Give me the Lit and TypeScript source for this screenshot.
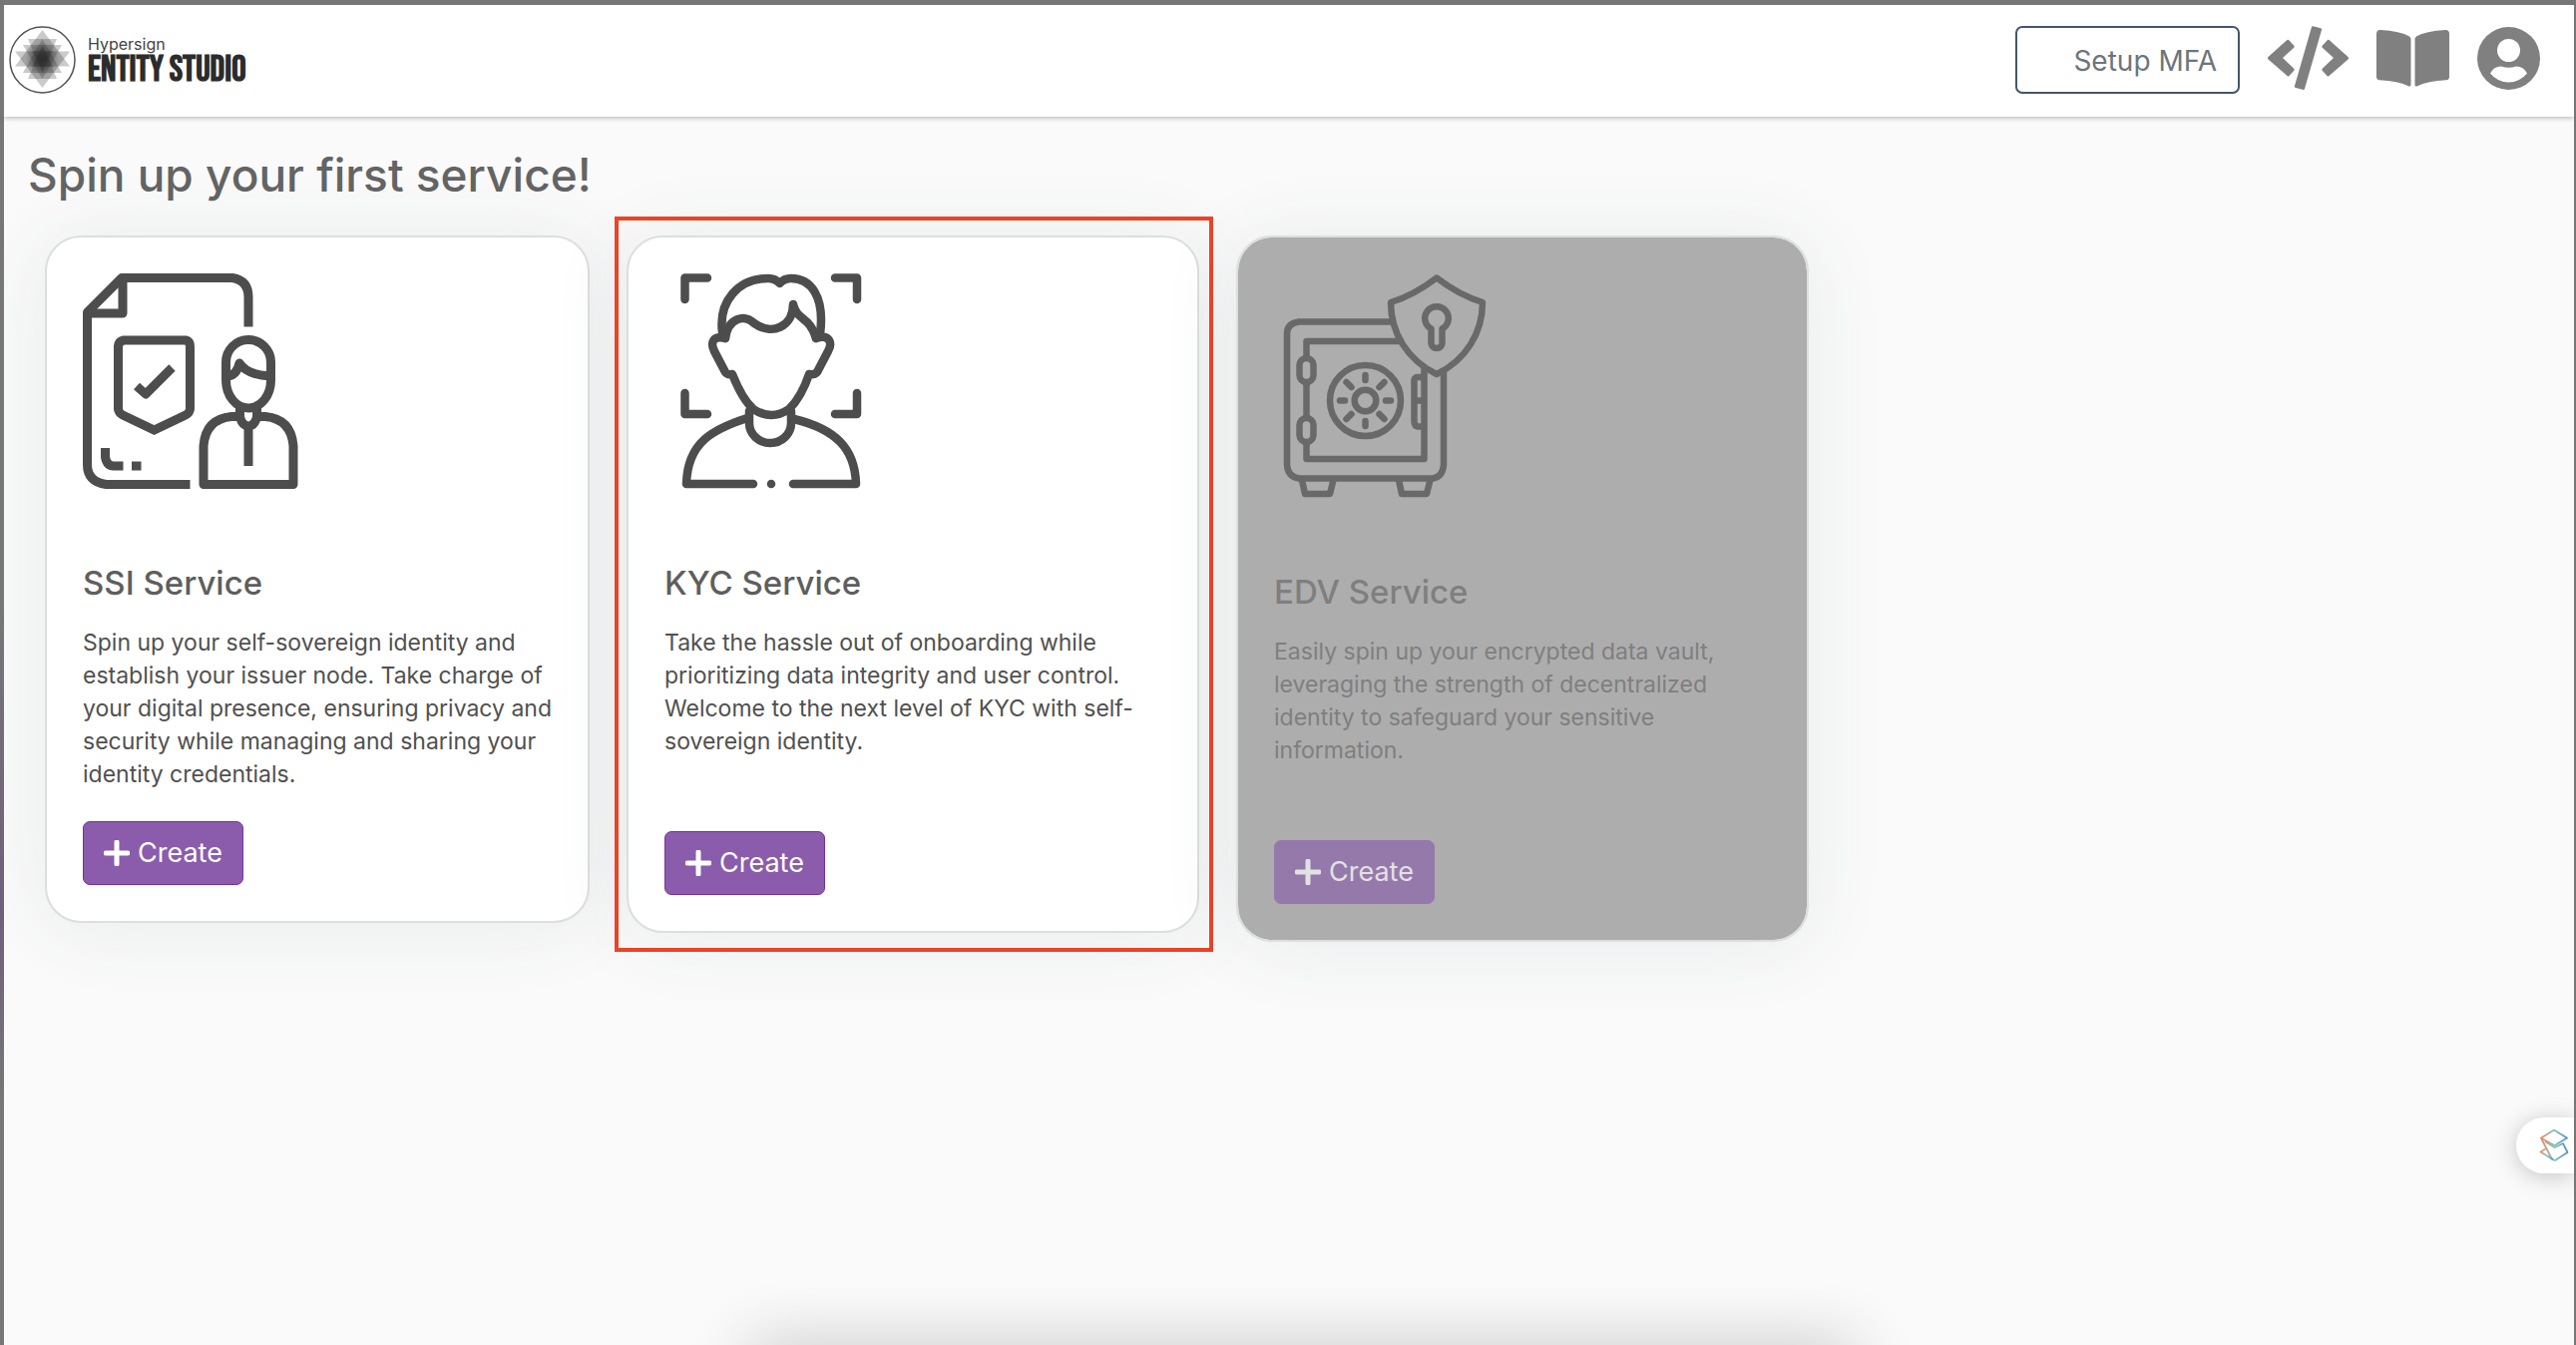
import { LitElement, html, css, svg } from "lit";
import { customElement, property } from "lit/decorators.js";

const plusIcon = html`<svg class="plus" viewBox="0 0 26 26" aria-hidden="true">
  <path d="M13 2v22M2 13h22" fill="none" stroke="currentColor" stroke-width="5" stroke-linecap="round" />
</svg>`;

const ssiArt = svg`
  <g fill="none" stroke="currentColor" stroke-width="9">
    <path d="M107.500 211.500H23.500Q4.500 209 4.500 191.500V39L39 4.500H150Q166 7 166 24V53.500" stroke-linejoin="round" />
    <path d="M4.500 40H40V4.500" stroke-linejoin="round" />
    <path d="M41 67H103Q107.500 68 107.500 73V136Q107 140 103 142L71.500 157L40 142Q36 140 35.500 136V73Q36 68 41 67Z" />
    <path d="M54 113L63 121L89.500 94.500" stroke-linejoin="round" />
    <path d="M22.500 175V184Q24 193 31 193H40.500M49 193H58.500" />
    <path d="M143.500 89A22.500 22.500 0 0 1 188.500 89V107A22.500 28 0 0 1 143.500 107Z" />
    <path d="M144 103Q154 103 157 90Q165 102 188 103" stroke-linejoin="round" />
    <path d="M157 143.500H149Q123 146 121 173V211.500H211V173Q209 146 183 143.500H175" stroke-linejoin="round" />
    <path d="M157.500 135V144Q160 153 166 153Q172 153 174.500 144V135M166 153V193" />
  </g>`;

const kycArt = svg`
  <g fill="none" stroke="currentColor" stroke-width="8.500" stroke-linecap="round" stroke-linejoin="round" transform="translate(14 0)">
    <path d="M29 4.500H6.500V26M157 4.500H179V26M6.500 120V141H29M179 120V141H157" />
    <path d="M44 59C40 28 60 5 90 5Q97 5 101.500 10Q106 5 113 5C132 5 147 22 142 61" />
    <path d="M47 65C50 44 66 41 76 50C94 63 115 53 115 31C119 48 131 42 138 65" />
    <path d="M47 65C34 62 32 70 36 78L47 99Q49 102 54 101C60 116 66 128 75 136Q93 148 111 136C119 128 126 116 131 101Q136 102 139 99L150 78C155 69 151 61 138 65" />
    <path d="M71 138V150A21 20 0 0 0 113 150V138" />
    <path d="M69 145C35 156 9 169 8 211H75M115 211H178C177 175 157 156 116 146" />
    <path d="M93 211h.01" />
  </g>`;

const edvArt = svg`
  <g fill="none" stroke="currentColor" stroke-width="6.500" stroke-linecap="round" stroke-linejoin="round" transform="translate(3 0)">
    <path d="M115 48.500H22Q10 50 10 60.500V192Q11 204 22 205.500H156Q166 204 167 192V96" />
    <path d="M126 68H29.500V186H147.500V92" />
    <rect x="22.500" y="85" width="14" height="24" rx="7" class="knock" />
    <rect x="22.500" y="145" width="14" height="24" rx="7" class="knock" />
    <path d="M147 104H140Q137.500 105 137.500 107V149Q138 153 141 153.500H147M139 127.500H147" />
    <circle cx="88.500" cy="127.500" r="35.500" />
    <circle cx="88.500" cy="127.500" r="10.800" />
    <path d="M88.500 102v5M88.500 148v5M63 127.500h5M109 127.500h5M69.500 109l5 5M107.500 109l-5 5M69.500 146l5-5M107.500 146l-5-5" />
    <path d="M25 207L28 221H53L56.500 207M122 207L125 221H150L153.500 207" />
    <path d="M160 4.500Q183 22 206 29C206 60 189 87 160 101C131 87 114 60 114 29Q137 22 160 4.500Z" class="knock" />
    <path d="M154.500 55.500A11.800 11.800 0 1 1 165.500 55.500V70A5.500 5 0 0 1 154.500 70Z" />
  </g>`;

interface Service {
  name: string;
  text: string;
  art: unknown;
  artHeight: number;
  kind: string;
}

const services: Service[] = [
  {
    name: "SSI Service",
    text: "Spin up your self-sovereign identity and establish your issuer node. Take charge of your digital presence, ensuring privacy and security while managing and sharing your identity credentials.",
    art: ssiArt,
    artHeight: 216,
    kind: "first",
  },
  {
    name: "KYC Service",
    text: "Take the hassle out of onboarding while prioritizing data integrity and user control. Welcome to the next level of KYC with self-sovereign identity.",
    art: kycArt,
    artHeight: 216,
    kind: "marked",
  },
  {
    name: "EDV Service",
    text: "Easily spin up your encrypted data vault, leveraging the strength of decentralized identity to safeguard your sensitive information.",
    art: edvArt,
    artHeight: 225,
    kind: "locked",
  },
];

@customElement("service-card")
export class ServiceCard extends LitElement {
  @property({ attribute: false }) service!: Service;

  static styles = css`
    :host {
      display: block;
    }
    .card {
      position: relative;
      box-sizing: border-box;
      padding: 36px 28px 36px 36px;
      border: 2px solid #dddede;
      border-radius: 36px;
      background: #fff;
      background-clip: padding-box;
      color: #4d4d4d;
      box-shadow: 0 4px 80px rgba(50, 75, 85, 0.09);
    }
    .art {
      display: block;
      width: 216px;
    }
    .knock {
      fill: #fff;
    }
    .name {
      margin: 72px 0 0;
      font-size: 33px;
      line-height: 44px;
      font-weight: 500;
      color: #5e5e5e;
    }
    .text {
      margin: 22px 0 30px;
      font-size: 23px;
      line-height: 33px;
      color: #505050;
    }
    .marked .text,
    .locked .text {
      min-height: 175px;
    }
    .create {
      display: inline-flex;
      align-items: center;
      gap: 8px;
      height: 64px;
      padding: 0 20px;
      border: 1px solid #7b2ea0;
      border-radius: 7px;
      background: #8a5cab;
      color: #fff;
      font: inherit;
      font-size: 27px;
      line-height: 40px;
      vertical-align: top;
    }
    .plus {
      width: 26px;
      height: 26px;
    }
    .marked::after {
      content: "";
      position: absolute;
      inset: -21px -16px -21px -14px;
      border: 4px solid #ea4428;
      pointer-events: none;
    }
    .locked {
      background: #adadad;
      background-clip: padding-box;
      color: #696969;
    }
    .locked .name,
    .locked .text {
      color: #7f7f7f;
    }
    .locked .knock {
      fill: #adadad;
    }
    .locked .create {
      border-color: #9679ab;
      background: #9679ab;
      color: #e2e2e2;
    }
  `;

  render() {
    const s = this.service;
    return html`<article class="card ${s.kind}">
      <svg class="art" viewBox="0 0 216 ${s.artHeight}" aria-hidden="true">${s.art}</svg>
      <h2 class="name">${s.name}</h2>
      <p class="text">${s.text}</p>
      <button class="create" type="button" ?disabled=${s.kind === "locked"}>${plusIcon}<span>Create</span></button>
    </article>`;
  }
}

@customElement("app-root")
export class AppRoot extends LitElement {
  static styles = css`
    :host {
      display: block;
      font-family: Inter, "Liberation Sans", sans-serif;
    }
    .page {
      position: relative;
      box-sizing: border-box;
      min-height: 100vh;
      overflow: hidden;
      border: solid transparent;
      border-width: 5px 2px 0 4px;
      background:
        linear-gradient(#fafafa, #fafafa) padding-box,
        linear-gradient(#777 0 45%, #6e607c 68%, #777 82%) 0 0 / 4px 100% no-repeat border-box,
        linear-gradient(#777, #777) border-box;
    }
    .bar {
      display: flex;
      align-items: center;
      justify-content: space-between;
      height: 112px;
      padding: 0 34px 2px 5px;
      box-sizing: border-box;
      background: #fff;
      box-shadow: 0 1px 5px rgba(0, 0, 0, 0.3);
    }
    .brand {
      display: flex;
      align-items: center;
      gap: 12px;
      color: #2c2c2c;
      text-decoration: none;
    }
    .emblem {
      width: 67px;
      height: 68px;
    }
    .words {
      display: flex;
      flex-direction: column;
      padding-top: 4px;
    }
    .maker {
      font-size: 16px;
      line-height: 18px;
      color: #444;
    }
    .product {
      font-family: "Bebas Neue", "Roboto Condensed", "Liberation Sans Narrow", "Open Sans Condensed", Roboto, sans-serif;
      font-weight: 700;
      font-size: 36px;
      line-height: 36px;
    }
    .tools {
      display: flex;
      align-items: center;
      gap: 28px;
      color: #808080;
    }
    .mfa {
      width: 225px;
      height: 68px;
      padding: 2px 21px 0;
      border: 2px solid #44566a;
      border-radius: 7px;
      background: #fff;
      color: #6c757d;
      font: inherit;
      font-size: 28px;
      text-align: right;
    }
    .tool {
      display: block;
      padding: 0 0 4px;
      border: 0;
      background: none;
      color: inherit;
    }
    .tool svg {
      display: block;
    }
    .title {
      margin: 0;
      padding: 28px 24px 0;
      font-size: 46px;
      line-height: 60px;
      font-weight: 500;
      color: #646464;
    }
    .cards {
      display: grid;
      grid-template-columns: 546fr 574fr 574fr 692fr;
      align-items: start;
      gap: 37px;
      padding: 31px 38px 80px 41px;
    }
    .helper {
      position: absolute;
      right: 0;
      top: 1115px;
      display: flex;
      align-items: center;
      width: 58px;
      height: 56px;
      padding: 0 0 0 23px;
      box-sizing: border-box;
      border: 0;
      border-radius: 28px 0 0 28px;
      background: #fff;
      box-shadow: 0 3px 24px rgba(0, 0, 0, 0.22);
    }
    .dock {
      position: absolute;
      left: 29%;
      right: 28%;
      bottom: -40px;
      height: 40px;
      box-shadow: 0 0 64px rgba(0, 0, 0, 0.24);
    }
  `;

  /* Each layer is a pair of mirrored triangles: base height, half width, apex height. */
  private emblem() {
    const layers = [
      [25.5, 27.5, 62],
      [19, 19.5, 53],
      [13, 14.5, 47],
      [25, 11, 45],
    ];
    return html`<svg class="emblem" viewBox="0 0 67 68" aria-hidden="true">
      <defs>
        <radialGradient id="core">
          <stop offset="0" stop-color="#222" stop-opacity=".7" />
          <stop offset="1" stop-color="#222" stop-opacity="0" />
        </radialGradient>
      </defs>
      <ellipse cx="33.500" cy="34" rx="32.500" ry="33" fill="#fff" stroke="#555" stroke-width="1.500" />
      <g fill="#333" fill-opacity=".26">
        ${layers.map(
          ([base, half, apex]) => svg`
            <path d="M${33.5 - half} ${base}H${33.5 + half}L33.500 ${apex}Z" />
            <path d="M${33.5 - half} ${66 - base}H${33.5 + half}L33.500 ${66 - apex}Z" />`,
        )}
      </g>
      <circle cx="33.500" cy="33" r="17" fill="url(#core)" />
    </svg>`;
  }

  render() {
    return html`<div class="page">
      <header class="bar">
        <a class="brand" href="#">
          ${this.emblem()}
          <span class="words"><span class="maker">Hypersign</span><span class="product">ENTITY STUDIO</span></span>
        </a>
        <nav class="tools">
          <button class="mfa" type="button">Setup MFA</button>
          <button class="tool" type="button" aria-label="Developer API">
            <svg width="81" height="64" viewBox="0 0 81 64" fill="currentColor">
              <path d="M44 1Q44.500 0 45.500 .2L53 2.300Q54.500 3 54 4L37 63Q36.500 64.300 35 63.800L28 62Q26.500 61.400 27 60Z" />
              <path d="M19.500 14Q20.500 13.500 21.500 14.500L26.500 20Q27 21 26 22L15 32L26 42.500Q27 43.500 26.500 44.500L21.500 50Q20.500 51 19.500 50L.5 33.500Q-.5 32 .5 31Z" />
              <path d="M61.500 14Q60.500 13.500 59.500 14.500L54.500 20Q54 21 55 22L66 32L55 42.500Q54 43.500 54.500 44.500L59.500 50Q60.500 51 61.500 50L80.500 33.500Q81.500 32 80.500 31Z" />
            </svg>
          </button>
          <button class="tool" type="button" aria-label="Documentation">
            <svg width="73" height="57" viewBox="0 0 73 57" fill="currentColor">
              <path d="M3.500 0Q24 1 33 6.500Q34.500 7.500 34.500 9V55Q34.300 57 32.500 56.500Q22 51 3 50.300Q0 50 0 47V3.500Q.2 0 3.500 0Z" />
              <path d="M69.500 0Q49 1 40 6.500Q38.500 7.500 38.500 9V55Q38.700 57 40.500 56.500Q51 51 70 50.300Q73 50 73 47V3.500Q72.800 0 69.500 0Z" />
            </svg>
          </button>
          <button class="tool" type="button" aria-label="Account">
            <svg width="63" height="63" viewBox="0 0 63 63">
              <circle cx="31.500" cy="31.500" r="31.500" fill="currentColor" />
              <circle cx="31.500" cy="23.500" r="11.500" fill="#fff" />
              <path d="M13 46.500Q16.500 39.500 24 39.500Q31.500 42 39 39.500Q46.500 39.500 50 46.500Q42.500 55.500 31.500 55.500Q20.500 55.500 13 46.500Z" fill="#fff" />
            </svg>
          </button>
        </nav>
      </header>
      <main>
        <h1 class="title">Spin up your first service!</h1>
        <section class="cards">
          ${services.map((s) => html`<service-card .service=${s}></service-card>`)}
        </section>
      </main>
      <button class="helper" type="button" aria-label="Assistant">
        <svg width="30" height="34" viewBox="0 0 30 34">
          <defs>
            <linearGradient id="hue" x1="0" x2="1">
              <stop offset="0" stop-color="#ef8a63" />
              <stop offset=".5" stop-color="#7fc4bd" />
              <stop offset="1" stop-color="#5b93c8" />
            </linearGradient>
          </defs>
          <g fill="none" stroke="url(#hue)" stroke-width="1.800" stroke-linejoin="round">
            <path d="M15 1.500L28 9.500L15.500 17L2 9.500Z" />
            <path d="M2 9.500L13 31L16 32L28.500 24L24 15L15.500 19L6 13" />
            <path d="M7 20L1.500 23.500L14 31" />
          </g>
        </svg>
      </button>
      <div class="dock"></div>
    </div>`;
  }
}
